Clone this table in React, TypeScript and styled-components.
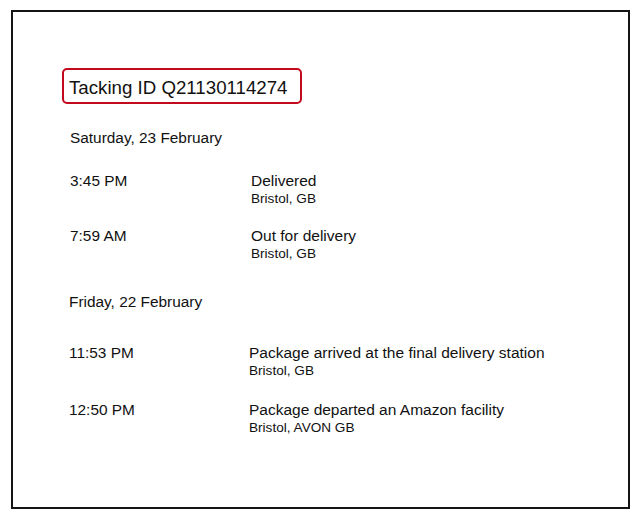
import React from "react";
import styled, { createGlobalStyle } from "styled-components";

const GlobalStyle = createGlobalStyle`
  html, body {
    margin: 0;
    padding: 0;
    background: #ffffff;
  }
  body {
    font-family: "Liberation Sans", Arial, sans-serif;
    color: #111111;
  }
`;

const Page = styled.div`
  width: 639px;
  height: 521px;
  padding: 10px 0 0 11px;
  box-sizing: border-box;
`;

const Card = styled.div`
  width: 619px;
  height: 499px;
  box-sizing: border-box;
  border: 2px solid #151515;
  padding: 56px 0 0 49px;
  display: flex;
  flex-direction: column;
`;

const TrackingBox = styled.div`
  align-self: flex-start;
  width: 240px;
  height: 36px;
  box-sizing: border-box;
  border: 2px solid #c20a1c;
  border-radius: 5px;
  padding: 3px 0 0 5px;
  display: flex;
  align-items: center;
  font-size: 18.7px;
  line-height: 20px;
  color: #111111;
`;

const Group = styled.section<{ $indent: number; $top: number }>`
  display: flex;
  flex-direction: column;
  padding-left: ${(p) => p.$indent}px;
  margin-top: ${(p) => p.$top}px;
`;

const DateHeading = styled.div<{ $after: number }>`
  font-size: 15.4px;
  line-height: 18px;
  margin-bottom: ${(p) => p.$after}px;
`;

const Row = styled.div<{ $timeCol: number; $top: number }>`
  display: grid;
  grid-template-columns: ${(p) => p.$timeCol}px 1fr;
  margin-top: ${(p) => p.$top}px;
`;

const Time = styled.div`
  font-size: 15.4px;
  line-height: 18px;
`;

const Event = styled.div`
  display: flex;
  flex-direction: column;
`;

const Status = styled.div`
  font-size: 15.5px;
  line-height: 18px;
`;

const Place = styled.div`
  font-size: 13.6px;
  line-height: 18px;
`;

type Item = { time: string; status: string; place: string; top: number };

const days: {
  date: string;
  indent: number;
  top: number;
  after: number;
  timeCol: number;
  items: Item[];
}[] = [
  {
    date: "Saturday, 23 February",
    indent: 8,
    top: 25,
    after: 25,
    timeCol: 181,
    items: [
      { time: "3:45 PM", status: "Delivered", place: "Bristol, GB", top: 0 },
      { time: "7:59 AM", status: "Out for delivery", place: "Bristol, GB", top: 19 },
    ],
  },
  {
    date: "Friday, 22 February",
    indent: 7,
    top: 30,
    after: 33,
    timeCol: 180,
    items: [
      {
        time: "11:53 PM",
        status: "Package arrived at the final delivery station",
        place: "Bristol, GB",
        top: 0,
      },
      {
        time: "12:50 PM",
        status: "Package departed an Amazon facility",
        place: "Bristol, AVON GB",
        top: 21,
      },
    ],
  },
];

export default function App() {
  return (
    <>
      <GlobalStyle />
      <Page>
        <Card>
          <TrackingBox>Tacking ID Q21130114274</TrackingBox>
          {days.map((d) => (
            <Group key={d.date} $indent={d.indent} $top={d.top}>
              <DateHeading $after={d.after}>{d.date}</DateHeading>
              {d.items.map((it) => (
                <Row key={it.time} $timeCol={d.timeCol} $top={it.top}>
                  <Time>{it.time}</Time>
                  <Event>
                    <Status>{it.status}</Status>
                    <Place>{it.place}</Place>
                  </Event>
                </Row>
              ))}
            </Group>
          ))}
        </Card>
      </Page>
    </>
  );
}
